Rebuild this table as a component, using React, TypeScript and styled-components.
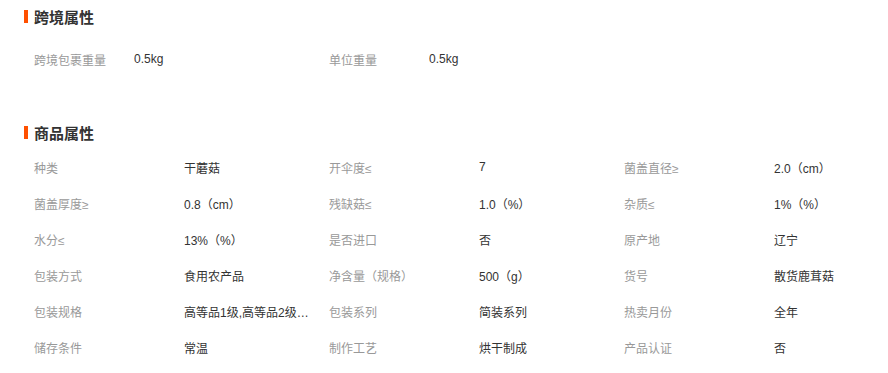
import React from "react";
import styled, { createGlobalStyle } from "styled-components";

const GlobalStyle = createGlobalStyle`
  body {
    margin: 0;
    background: #ffffff;
    font-family: "Liberation Sans", "Noto Sans CJK SC", sans-serif;
  }
`;

type Attr = {
  label: string;
  value: string;
};

const crossBorder: Attr[] = [
  { label: "跨境包裹重量", value: "0.5kg" },
  { label: "单位重量", value: "0.5kg" },
];

const productAttrs: Attr[] = [
  { label: "种类", value: "干蘑菇" },
  { label: "开伞度≤", value: "7" },
  { label: "菌盖直径≥", value: "2.0（cm）" },
  { label: "菌盖厚度≥", value: "0.8（cm）" },
  { label: "残缺菇≤", value: "1.0（%）" },
  { label: "杂质≤", value: "1%（%）" },
  { label: "水分≤", value: "13%（%）" },
  { label: "是否进口", value: "否" },
  { label: "原产地", value: "辽宁" },
  { label: "包装方式", value: "食用农产品" },
  { label: "净含量（规格）", value: "500（g）" },
  { label: "货号", value: "散货鹿茸菇" },
  { label: "包装规格", value: "高等品1级,高等品2级,高等品3级" },
  { label: "包装系列", value: "简装系列" },
  { label: "热卖月份", value: "全年" },
  { label: "储存条件", value: "常温" },
  { label: "制作工艺", value: "烘干制成" },
  { label: "产品认证", value: "否" },
];

const Page = styled.div`
  width: 888px;
  padding-top: 4px;
`;

const Section = styled.section<{ $gap: number; $bottom: number }>`
  display: flex;
  flex-direction: column;
  gap: ${(p) => p.$gap}px;
  margin-bottom: ${(p) => p.$bottom}px;
`;

const Title = styled.h3`
  margin: 0 0 0 24px;
  height: 24px;
  display: flex;
  align-items: center;
  gap: 6px;
  font-size: 15px;
  font-weight: bold;
  color: #333;
  font-family: "Noto Sans CJK SC", sans-serif;

  &::before {
    content: "";
    width: 4px;
    height: 13px;
    background: #ff5000;
  }
`;

const Grid = styled.div<{ $labelWidth: number; $valueWidth: number }>`
  display: grid;
  grid-template-columns: repeat(
    3,
    ${(p) => p.$labelWidth}px ${(p) => p.$valueWidth}px
  );
  grid-auto-rows: 36px;
  padding-left: 34px;
  font-size: 12px;
`;

const Label = styled.div`
  align-self: center;
  color: #999;
  white-space: nowrap;
`;

const Value = styled.div`
  align-self: center;
  color: #333;
  white-space: nowrap;
  overflow: hidden;
  text-overflow: ellipsis;
  margin-right: 20px;
`;

function AttrGrid({
  items,
  labelWidth,
  valueWidth,
}: {
  items: Attr[];
  labelWidth: number;
  valueWidth: number;
}) {
  return (
    <Grid $labelWidth={labelWidth} $valueWidth={valueWidth}>
      {items.map((item) => (
        <React.Fragment key={item.label}>
          <Label>{item.label}</Label>
          <Value title={item.value}>{item.value}</Value>
        </React.Fragment>
      ))}
    </Grid>
  );
}

export default function App() {
  return (
    <Page>
      <GlobalStyle />
      <Section $gap={13} $bottom={43}>
        <Title>跨境属性</Title>
        <AttrGrid items={crossBorder} labelWidth={100} valueWidth={195} />
      </Section>
      <Section $gap={5} $bottom={0}>
        <Title>商品属性</Title>
        <AttrGrid items={productAttrs} labelWidth={150} valueWidth={145} />
      </Section>
    </Page>
  );
}
